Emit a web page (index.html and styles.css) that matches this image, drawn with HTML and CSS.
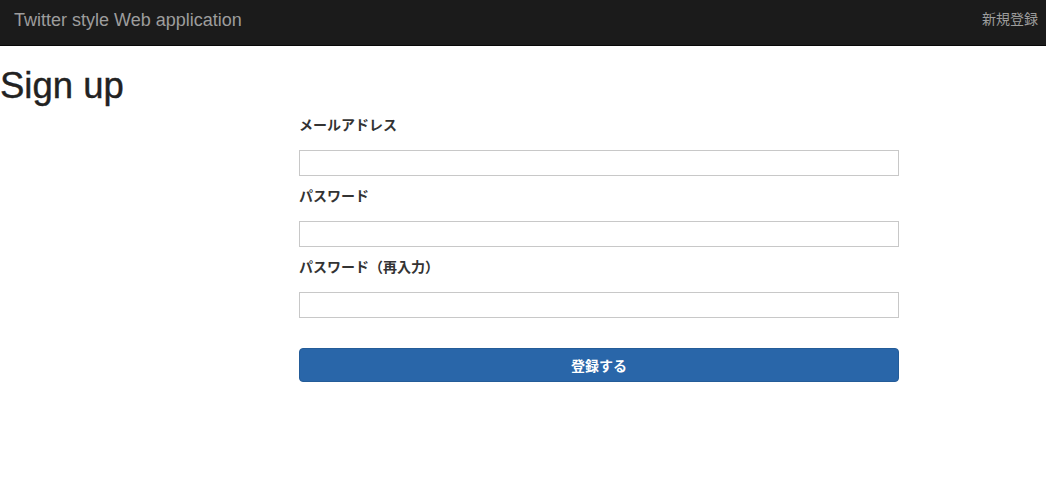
FILE: index.html
```html
<!DOCTYPE html>
<html lang="ja">
<head>
<meta charset="utf-8">
<title>Sign up</title>
<link rel="stylesheet" href="styles.css">
</head>
<body>
<nav class="navbar">
  <a class="brand" href="#">Twitter style Web application</a>
  <a class="nav-link" href="#">新規登録</a>
</nav>
<main class="page">
  <h1 class="title">Sign up</h1>
  <form class="form">
    <div class="form-group">
      <label class="label">メールアドレス</label>
      <input class="input" type="email">
    </div>
    <div class="form-group">
      <label class="label">パスワード</label>
      <input class="input" type="password">
    </div>
    <div class="form-group">
      <label class="label">パスワード（再入力）</label>
      <input class="input" type="password">
    </div>
    <button class="btn" type="button">登録する</button>
  </form>
</main>
</body>
</html>
```
FILE: styles.css
```css
* { box-sizing: border-box; }
body {
  margin: 0;
  font-family: "Liberation Sans", "Noto Sans CJK JP", Arial, sans-serif;
  font-size: 14px;
  color: #333;
  background: #fff;
}
.navbar {
  height: 46px;
  background: #1b1b1b;
  border-bottom: 1px solid #080808;
  display: flex;
  align-items: center;
  justify-content: space-between;
  padding: 0 8px 0 14px;
}
.brand {
  color: #9d9d9d;
  font-size: 18px;
  text-decoration: none;
  line-height: 20px;
  margin-top: -6px;
}
.nav-link {
  color: #9d9d9d;
  font-size: 14px;
  text-decoration: none;
  line-height: 20px;
  margin-top: -7px;
}
.page { padding: 0; }
.title {
  margin: 20px 0 9px;
  font-size: 36.5px;
  font-weight: 500;
  line-height: 1.1;
  color: #222;
  -webkit-text-stroke: 0.4px #222;
}
.form {
  width: 600px;
  margin-left: 299px;
}
.form-group { margin-bottom: 10px; }
.label {
  display: block;
  font-weight: bold;
  line-height: 20px;
  margin-bottom: 15px;
  color: #333;
}
.input {
  display: block;
  width: 100%;
  height: 26px;
  border: 1px solid #c8c8c8;
  padding: 2px 6px;
  font-size: 14px;
  outline: none;
}
.btn {
  display: block;
  width: 100%;
  height: 34px;
  margin-top: 30px;
  background: #2966a9;
  border: 1px solid #245c98;
  border-radius: 4px;
  color: #fff;
  font-family: "Liberation Sans", "Noto Sans CJK JP", sans-serif;
  font-size: 14px;
  font-weight: 700;
}
```
